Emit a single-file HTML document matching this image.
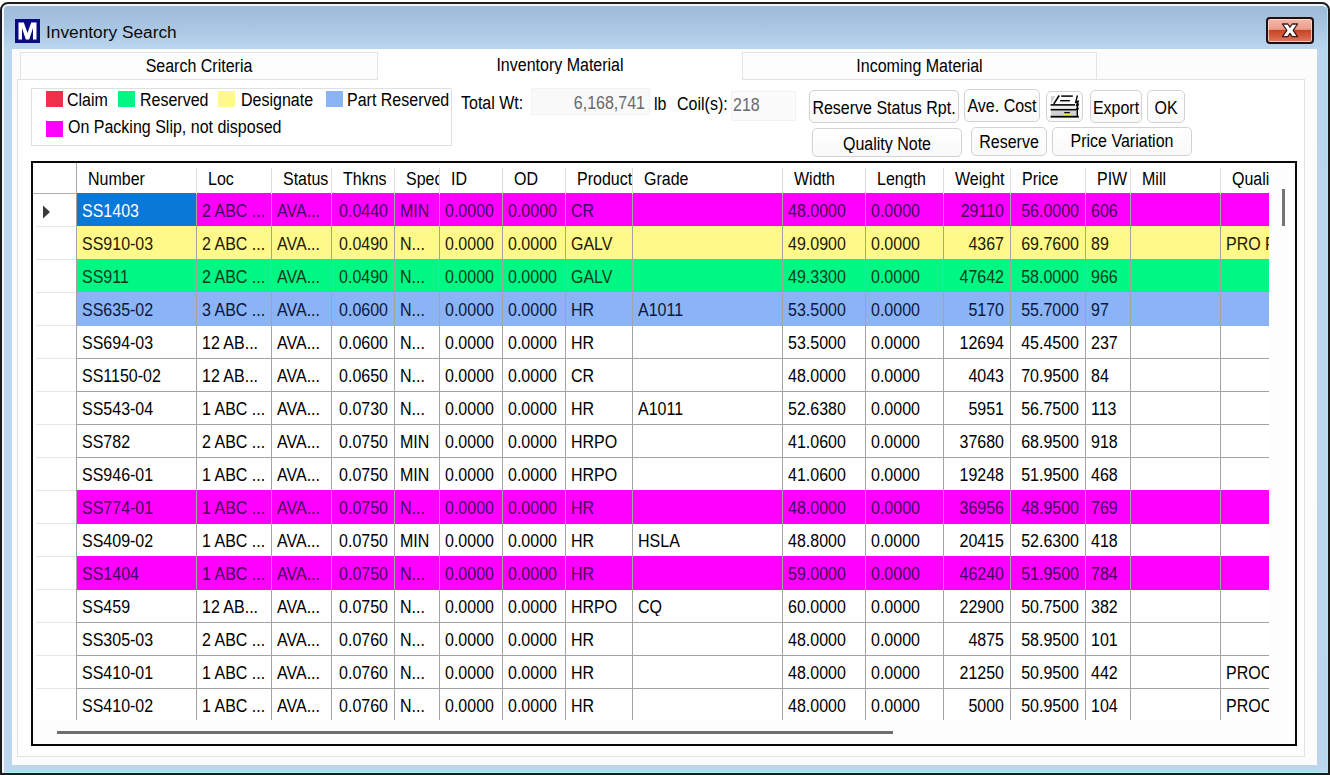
<!DOCTYPE html>
<html><head><meta charset="utf-8"><style>
*{box-sizing:border-box}
html,body{margin:0;padding:0;width:1330px;height:775px;overflow:hidden;background:#fff;font-family:"Liberation Sans",sans-serif;font-size:16px;color:#000}
.a{position:absolute}
#win{position:absolute;left:0;top:2px;width:1330px;height:773px;border:2px solid #1c1c1c;border-radius:8px 8px 0 0;background:linear-gradient(#9cb9d6 0px,#a9c6e3 24px,#bbd7ef 46px,#bcd6ee 100%);overflow:hidden}
#hl{position:absolute;left:0;top:0;right:0;bottom:0;border-left:2px solid #f4f8fc;border-top:2px solid #eef4fa;border-right:1.5px solid #a8e8f8;border-bottom:1.5px solid #b0f0fa;border-radius:6px 6px 0 0}
#client{position:absolute;left:12px;top:49px;width:1305px;height:716px;background:#fcfcfc}
.tab{position:absolute;border:1px solid #e4e4e4;border-bottom:none;background:#fdfdfd;text-align:center}
#page{position:absolute;left:17px;top:79px;width:1288px;height:678px;border:1px solid #e2e2e2;background:#fff}
.btn{position:absolute;border:1px solid #d2d2d2;border-radius:5px;background:linear-gradient(#ffffff,#f9f9f9);text-align:center;line-height:33px;white-space:nowrap}
.sq{position:absolute;width:17px;height:16px}
.lbl{position:absolute;white-space:nowrap;line-height:18px}
#grid{position:absolute;left:31px;top:161px;width:1266px;height:585px;border:2px solid #080808;background:#fdfdfd;overflow:hidden}
#grid div{position:absolute}
.hdr{background:#fff}
.hsep{top:5px;width:1px;height:25px;background:#dedede}
.ht{top:0;height:30px;line-height:31px;padding-left:11px;white-space:nowrap;overflow:hidden;background:transparent}
.c{height:32px;line-height:33px;padding-left:5px;white-space:nowrap;overflow:hidden}
.c.r{text-align:right;padding-left:0;padding-right:6px}
.t{position:static;display:inline-block;transform:scaleY(1.1)}
.vl{width:1px;height:33px;background:#a3a3a3}
.hl{height:1px;background:#a3a3a3}
</style></head><body>
<div id="win"><div id="hl"></div></div>
<!-- title -->
<div class="a" style="left:15px;top:19px;width:25px;height:24px;background:#0a0a82"></div>
<svg class="a" style="left:15px;top:19px" width="25" height="24" viewBox="0 0 25 24"><path d="M3.5 3.5 H8.8 L12.5 14 L16.2 3.5 H21.5 V20.5 H18 V9 L14.2 20.5 H10.8 L7 9 V20.5 H3.5 Z" fill="#fff"/></svg>
<div class="a" style="left:46px;top:22px;font-size:17.3px;line-height:20px;color:#0a0a0a;white-space:nowrap">Inventory Search</div>
<!-- close -->
<div class="a" style="left:1266px;top:17px;width:48px;height:27px;border:2px solid #1e1010;border-radius:4px;background:linear-gradient(#f4b8a8 0%,#eea090 40%,#e48c78 48%,#c94622 50%,#d2553a 70%,#e37a62 100%);box-shadow:inset 0 0 0 1px rgba(255,225,215,0.75)"></div>
<svg class="a" style="left:1266px;top:17px" width="48" height="27" viewBox="0 0 48 27"><path d="M16.5 7 L21.8 7 L24 10.2 L26.2 7 L31.5 7 L27.2 13.3 L31.5 19.6 L26.2 19.6 L24 16.4 L21.8 19.6 L16.5 19.6 L20.8 13.3 Z" fill="#fff" stroke="#3a1e1e" stroke-width="1.3" stroke-linejoin="round"/></svg>

<div id="client"></div>
<div class="tab" style="left:20px;top:52px;width:358px;height:28px;line-height:28px"><span class="t">Search Criteria</span></div>
<div class="tab" style="left:742px;top:52px;width:355px;height:28px;line-height:28px"><span class="t">Incoming Material</span></div>
<div id="page"></div>
<div class="a" style="left:378px;top:50px;width:364px;height:31px;background:#fff;text-align:center;line-height:29px"><span class="t">Inventory Material</span></div>

<!-- legend -->
<div class="a" style="left:31px;top:88px;width:421px;height:58px;border:1px solid #e0e0e0"></div>
<div class="sq" style="left:46px;top:91px;background:#f3304c"></div><div class="lbl" style="left:67px;top:92px"><span class="t">Claim</span></div>
<div class="sq" style="left:118px;top:91px;background:#00f784"></div><div class="lbl" style="left:140px;top:92px"><span class="t">Reserved</span></div>
<div class="sq" style="left:218px;top:91px;background:#fff98a"></div><div class="lbl" style="left:241px;top:92px"><span class="t">Designate</span></div>
<div class="sq" style="left:326px;top:91px;background:#8ab4f6"></div><div class="lbl" style="left:347px;top:92px"><span class="t">Part Reserved</span></div>
<div class="sq" style="left:46px;top:121px;background:#ff00ff"></div><div class="lbl" style="left:68px;top:119px"><span class="t">On Packing Slip, not disposed</span></div>

<!-- totals -->
<div class="lbl" style="left:461px;top:95px"><span class="t">Total Wt:</span></div>
<div class="a" style="left:531px;top:88px;width:119px;height:27px;border:1px solid #f2f2f2;background:#f9f9f9"></div>
<div class="lbl" style="left:531px;top:95px;width:114px;text-align:right;color:#6a6a6a"><span class="t">6,168,741</span></div>
<div class="lbl" style="left:654px;top:96px"><span class="t">lb</span></div>
<div class="lbl" style="left:677px;top:96px"><span class="t">Coil(s):</span></div>
<div class="a" style="left:731px;top:91px;width:65px;height:30px;border:1px solid #f2f2f2;background:#fbfbfb"></div>
<div class="lbl" style="left:733px;top:97px;color:#6a6a6a"><span class="t">218</span></div>

<!-- buttons -->
<div class="btn" style="left:809px;top:90px;width:150px;height:33px"><span class="t">Reserve Status Rpt.</span></div>
<div class="btn" style="left:964px;top:89px;width:76px;height:33px;line-height:31px"><span class="t">Ave. Cost</span></div>
<div class="btn" style="left:1046px;top:91px;width:37px;height:31px"></div>
<svg class="a" style="left:1046px;top:91px" width="37" height="31" viewBox="0 0 37 31">
<path d="M5 5 L9.2 5 L5 13 Z" fill="#d0d0d0"/>
<path d="M7.8 12.9 L13.2 4.5" stroke="#000" stroke-width="1.6" fill="none"/>
<path d="M15.2 5.1 H26.8" stroke="#000" stroke-width="1.5"/>
<path d="M14.2 9.7 H23.9" stroke="#000" stroke-width="1.4"/>
<rect x="5" y="14.8" width="24.5" height="3" fill="#eeeeee"/>
<rect x="5" y="19.6" width="26" height="5.2" fill="#d2d2d2"/>
<rect x="17.8" y="22.6" width="6.8" height="2.4" fill="#eeea3a"/>
<path d="M4.6 13.9 H29" stroke="#000" stroke-width="1.6"/>
<path d="M4.6 18.7 H30.5" stroke="#000" stroke-width="1.6"/>
<path d="M18.3 21.6 H23.9" stroke="#000" stroke-width="1.3"/>
<path d="M4.6 25.7 H32.8" stroke="#000" stroke-width="1.8"/>
<path d="M31.4 4.5 L29.6 11.6 L32.3 9.9 L30.4 14.6 L32.3 13 L30.6 18.4 L32.2 17.2 L31.3 18.8 L31.3 25.6" stroke="#000" stroke-width="1.4" fill="none" stroke-linejoin="round"/>
</svg>
<div class="btn" style="left:1090px;top:90px;width:52px;height:33px"><span class="t">Export</span></div>
<div class="btn" style="left:1147px;top:90px;width:38px;height:33px"><span class="t">OK</span></div>
<div class="btn" style="left:812px;top:128px;width:150px;height:29px;line-height:29px"><span class="t">Quality Note</span></div>
<div class="btn" style="left:971px;top:127px;width:76px;height:29px;line-height:27px"><span class="t">Reserve</span></div>
<div class="btn" style="left:1052px;top:127px;width:140px;height:29px;line-height:28px"><span class="t">Price Variation</span></div>

<!-- grid -->
<div id="grid">
<div style="left:0;top:0;width:1236px;height:557px;overflow:hidden;background:#fff">
<div class="hdr" style="left:0;top:0;width:1236px;height:30px"></div>
<div class="hsep" style="left:163px"></div>
<div class="ht" style="left:44px;width:119px"><span class="t">Number</span></div>
<div class="hsep" style="left:238px"></div>
<div class="ht" style="left:164px;width:74px"><span class="t">Loc</span></div>
<div class="hsep" style="left:298px"></div>
<div class="ht" style="left:239px;width:59px"><span class="t">Status</span></div>
<div class="hsep" style="left:361px"></div>
<div class="ht" style="left:299px;width:62px"><span class="t">Thkns</span></div>
<div class="hsep" style="left:406px"></div>
<div class="ht" style="left:362px;width:44px"><span class="t">Spec</span></div>
<div class="hsep" style="left:469px"></div>
<div class="ht" style="left:407px;width:62px"><span class="t">ID</span></div>
<div class="hsep" style="left:532px"></div>
<div class="ht" style="left:470px;width:62px"><span class="t">OD</span></div>
<div class="hsep" style="left:599px"></div>
<div class="ht" style="left:533px;width:66px"><span class="t">Product</span></div>
<div class="hsep" style="left:749px"></div>
<div class="ht" style="left:600px;width:149px"><span class="t">Grade</span></div>
<div class="hsep" style="left:832px"></div>
<div class="ht" style="left:750px;width:82px"><span class="t">Width</span></div>
<div class="hsep" style="left:910px"></div>
<div class="ht" style="left:833px;width:77px"><span class="t">Length</span></div>
<div class="hsep" style="left:977px"></div>
<div class="ht" style="left:911px;width:66px"><span class="t">Weight</span></div>
<div class="hsep" style="left:1052px"></div>
<div class="ht" style="left:978px;width:74px"><span class="t">Price</span></div>
<div class="hsep" style="left:1097px"></div>
<div class="ht" style="left:1053px;width:44px"><span class="t">PIW</span></div>
<div class="hsep" style="left:1187px"></div>
<div class="ht" style="left:1098px;width:89px"><span class="t">Mill</span></div>
<div class="ht" style="left:1188px;width:48px"><span class="t">Quality</span></div>
<div class="vl" style="left:43px;top:0;height:31px;background:#a8a8a8"></div>
<div class="hl" style="left:0px;top:30px;width:43px;background:#b0b0b0"></div>
<div style="left:0;top:31px;width:43px;height:32px;background:#fff"></div>
<div class="hl" style="left:3px;top:63px;width:40px;background:#e6e6e6"></div>
<div class="c" style="left:44px;top:30px;width:119px;height:34px;line-height:35px;background:#0a78d6;color:#ffffff"><span class="t">SS1403</span></div>
<div class="vl" style="left:163px;top:31px"></div>
<div class="c" style="left:164px;top:30px;width:74px;height:34px;line-height:35px;background:#ff00ff;color:#44005a"><span class="t">2 ABC ...</span></div>
<div class="vl" style="left:238px;top:31px"></div>
<div class="c" style="left:239px;top:30px;width:59px;height:34px;line-height:35px;background:#ff00ff;color:#44005a"><span class="t">AVA...</span></div>
<div class="vl" style="left:298px;top:31px"></div>
<div class="c r" style="left:299px;top:30px;width:62px;height:34px;line-height:35px;background:#ff00ff;color:#44005a"><span class="t">0.0440</span></div>
<div class="vl" style="left:361px;top:31px"></div>
<div class="c" style="left:362px;top:30px;width:44px;height:34px;line-height:35px;background:#ff00ff;color:#44005a"><span class="t">MIN</span></div>
<div class="vl" style="left:406px;top:31px"></div>
<div class="c" style="left:407px;top:30px;width:62px;height:34px;line-height:35px;background:#ff00ff;color:#44005a"><span class="t">0.0000</span></div>
<div class="vl" style="left:469px;top:31px"></div>
<div class="c" style="left:470px;top:30px;width:62px;height:34px;line-height:35px;background:#ff00ff;color:#44005a"><span class="t">0.0000</span></div>
<div class="vl" style="left:532px;top:31px"></div>
<div class="c" style="left:533px;top:30px;width:66px;height:34px;line-height:35px;background:#ff00ff;color:#44005a"><span class="t">CR</span></div>
<div class="vl" style="left:599px;top:31px"></div>
<div class="c" style="left:600px;top:30px;width:149px;height:34px;line-height:35px;background:#ff00ff;color:#44005a"></div>
<div class="vl" style="left:749px;top:31px"></div>
<div class="c" style="left:750px;top:30px;width:82px;height:34px;line-height:35px;background:#ff00ff;color:#44005a"><span class="t">48.0000</span></div>
<div class="vl" style="left:832px;top:31px"></div>
<div class="c" style="left:833px;top:30px;width:77px;height:34px;line-height:35px;background:#ff00ff;color:#44005a"><span class="t">0.0000</span></div>
<div class="vl" style="left:910px;top:31px"></div>
<div class="c r" style="left:911px;top:30px;width:66px;height:34px;line-height:35px;background:#ff00ff;color:#44005a"><span class="t">29110</span></div>
<div class="vl" style="left:977px;top:31px"></div>
<div class="c r" style="left:978px;top:30px;width:74px;height:34px;line-height:35px;background:#ff00ff;color:#44005a"><span class="t">56.0000</span></div>
<div class="vl" style="left:1052px;top:31px"></div>
<div class="c" style="left:1053px;top:30px;width:44px;height:34px;line-height:35px;background:#ff00ff;color:#44005a"><span class="t">606</span></div>
<div class="vl" style="left:1097px;top:31px"></div>
<div class="c" style="left:1098px;top:30px;width:89px;height:34px;line-height:35px;background:#ff00ff;color:#44005a"></div>
<div class="vl" style="left:1187px;top:31px"></div>
<div class="c" style="left:1188px;top:30px;width:48px;height:34px;line-height:35px;background:#ff00ff;color:#44005a"></div>
<div class="vl" style="left:43px;top:31px"></div>
<div style="left:0;top:64px;width:43px;height:32px;background:#fff"></div>
<div class="hl" style="left:3px;top:96px;width:40px;background:#e6e6e6"></div>
<div class="c" style="left:44px;top:63px;width:119px;height:34px;line-height:35px;background:#fff98a;color:#1c1a00"><span class="t">SS910-03</span></div>
<div class="vl" style="left:163px;top:64px"></div>
<div class="c" style="left:164px;top:63px;width:74px;height:34px;line-height:35px;background:#fff98a;color:#1c1a00"><span class="t">2 ABC ...</span></div>
<div class="vl" style="left:238px;top:64px"></div>
<div class="c" style="left:239px;top:63px;width:59px;height:34px;line-height:35px;background:#fff98a;color:#1c1a00"><span class="t">AVA...</span></div>
<div class="vl" style="left:298px;top:64px"></div>
<div class="c r" style="left:299px;top:63px;width:62px;height:34px;line-height:35px;background:#fff98a;color:#1c1a00"><span class="t">0.0490</span></div>
<div class="vl" style="left:361px;top:64px"></div>
<div class="c" style="left:362px;top:63px;width:44px;height:34px;line-height:35px;background:#fff98a;color:#1c1a00"><span class="t">N...</span></div>
<div class="vl" style="left:406px;top:64px"></div>
<div class="c" style="left:407px;top:63px;width:62px;height:34px;line-height:35px;background:#fff98a;color:#1c1a00"><span class="t">0.0000</span></div>
<div class="vl" style="left:469px;top:64px"></div>
<div class="c" style="left:470px;top:63px;width:62px;height:34px;line-height:35px;background:#fff98a;color:#1c1a00"><span class="t">0.0000</span></div>
<div class="vl" style="left:532px;top:64px"></div>
<div class="c" style="left:533px;top:63px;width:66px;height:34px;line-height:35px;background:#fff98a;color:#1c1a00"><span class="t">GALV</span></div>
<div class="vl" style="left:599px;top:64px"></div>
<div class="c" style="left:600px;top:63px;width:149px;height:34px;line-height:35px;background:#fff98a;color:#1c1a00"></div>
<div class="vl" style="left:749px;top:64px"></div>
<div class="c" style="left:750px;top:63px;width:82px;height:34px;line-height:35px;background:#fff98a;color:#1c1a00"><span class="t">49.0900</span></div>
<div class="vl" style="left:832px;top:64px"></div>
<div class="c" style="left:833px;top:63px;width:77px;height:34px;line-height:35px;background:#fff98a;color:#1c1a00"><span class="t">0.0000</span></div>
<div class="vl" style="left:910px;top:64px"></div>
<div class="c r" style="left:911px;top:63px;width:66px;height:34px;line-height:35px;background:#fff98a;color:#1c1a00"><span class="t">4367</span></div>
<div class="vl" style="left:977px;top:64px"></div>
<div class="c r" style="left:978px;top:63px;width:74px;height:34px;line-height:35px;background:#fff98a;color:#1c1a00"><span class="t">69.7600</span></div>
<div class="vl" style="left:1052px;top:64px"></div>
<div class="c" style="left:1053px;top:63px;width:44px;height:34px;line-height:35px;background:#fff98a;color:#1c1a00"><span class="t">89</span></div>
<div class="vl" style="left:1097px;top:64px"></div>
<div class="c" style="left:1098px;top:63px;width:89px;height:34px;line-height:35px;background:#fff98a;color:#1c1a00"></div>
<div class="vl" style="left:1187px;top:64px"></div>
<div class="c" style="left:1188px;top:63px;width:48px;height:34px;line-height:35px;background:#fff98a;color:#1c1a00"><span class="t">PRO F</span></div>
<div class="vl" style="left:43px;top:64px"></div>
<div style="left:0;top:97px;width:43px;height:32px;background:#fff"></div>
<div class="hl" style="left:3px;top:129px;width:40px;background:#e6e6e6"></div>
<div class="c" style="left:44px;top:96px;width:119px;height:34px;line-height:35px;background:#00f784;color:#003c1c"><span class="t">SS911</span></div>
<div class="vl" style="left:163px;top:97px"></div>
<div class="c" style="left:164px;top:96px;width:74px;height:34px;line-height:35px;background:#00f784;color:#003c1c"><span class="t">2 ABC ...</span></div>
<div class="vl" style="left:238px;top:97px"></div>
<div class="c" style="left:239px;top:96px;width:59px;height:34px;line-height:35px;background:#00f784;color:#003c1c"><span class="t">AVA...</span></div>
<div class="vl" style="left:298px;top:97px"></div>
<div class="c r" style="left:299px;top:96px;width:62px;height:34px;line-height:35px;background:#00f784;color:#003c1c"><span class="t">0.0490</span></div>
<div class="vl" style="left:361px;top:97px"></div>
<div class="c" style="left:362px;top:96px;width:44px;height:34px;line-height:35px;background:#00f784;color:#003c1c"><span class="t">N...</span></div>
<div class="vl" style="left:406px;top:97px"></div>
<div class="c" style="left:407px;top:96px;width:62px;height:34px;line-height:35px;background:#00f784;color:#003c1c"><span class="t">0.0000</span></div>
<div class="vl" style="left:469px;top:97px"></div>
<div class="c" style="left:470px;top:96px;width:62px;height:34px;line-height:35px;background:#00f784;color:#003c1c"><span class="t">0.0000</span></div>
<div class="vl" style="left:532px;top:97px"></div>
<div class="c" style="left:533px;top:96px;width:66px;height:34px;line-height:35px;background:#00f784;color:#003c1c"><span class="t">GALV</span></div>
<div class="vl" style="left:599px;top:97px"></div>
<div class="c" style="left:600px;top:96px;width:149px;height:34px;line-height:35px;background:#00f784;color:#003c1c"></div>
<div class="vl" style="left:749px;top:97px"></div>
<div class="c" style="left:750px;top:96px;width:82px;height:34px;line-height:35px;background:#00f784;color:#003c1c"><span class="t">49.3300</span></div>
<div class="vl" style="left:832px;top:97px"></div>
<div class="c" style="left:833px;top:96px;width:77px;height:34px;line-height:35px;background:#00f784;color:#003c1c"><span class="t">0.0000</span></div>
<div class="vl" style="left:910px;top:97px"></div>
<div class="c r" style="left:911px;top:96px;width:66px;height:34px;line-height:35px;background:#00f784;color:#003c1c"><span class="t">47642</span></div>
<div class="vl" style="left:977px;top:97px"></div>
<div class="c r" style="left:978px;top:96px;width:74px;height:34px;line-height:35px;background:#00f784;color:#003c1c"><span class="t">58.0000</span></div>
<div class="vl" style="left:1052px;top:97px"></div>
<div class="c" style="left:1053px;top:96px;width:44px;height:34px;line-height:35px;background:#00f784;color:#003c1c"><span class="t">966</span></div>
<div class="vl" style="left:1097px;top:97px"></div>
<div class="c" style="left:1098px;top:96px;width:89px;height:34px;line-height:35px;background:#00f784;color:#003c1c"></div>
<div class="vl" style="left:1187px;top:97px"></div>
<div class="c" style="left:1188px;top:96px;width:48px;height:34px;line-height:35px;background:#00f784;color:#003c1c"></div>
<div class="vl" style="left:43px;top:97px"></div>
<div style="left:0;top:130px;width:43px;height:32px;background:#fff"></div>
<div class="hl" style="left:3px;top:162px;width:40px;background:#e6e6e6"></div>
<div class="c" style="left:44px;top:129px;width:119px;height:34px;line-height:35px;background:#8ab4f6;color:#0c1640"><span class="t">SS635-02</span></div>
<div class="vl" style="left:163px;top:130px"></div>
<div class="c" style="left:164px;top:129px;width:74px;height:34px;line-height:35px;background:#8ab4f6;color:#0c1640"><span class="t">3 ABC ...</span></div>
<div class="vl" style="left:238px;top:130px"></div>
<div class="c" style="left:239px;top:129px;width:59px;height:34px;line-height:35px;background:#8ab4f6;color:#0c1640"><span class="t">AVA...</span></div>
<div class="vl" style="left:298px;top:130px"></div>
<div class="c r" style="left:299px;top:129px;width:62px;height:34px;line-height:35px;background:#8ab4f6;color:#0c1640"><span class="t">0.0600</span></div>
<div class="vl" style="left:361px;top:130px"></div>
<div class="c" style="left:362px;top:129px;width:44px;height:34px;line-height:35px;background:#8ab4f6;color:#0c1640"><span class="t">N...</span></div>
<div class="vl" style="left:406px;top:130px"></div>
<div class="c" style="left:407px;top:129px;width:62px;height:34px;line-height:35px;background:#8ab4f6;color:#0c1640"><span class="t">0.0000</span></div>
<div class="vl" style="left:469px;top:130px"></div>
<div class="c" style="left:470px;top:129px;width:62px;height:34px;line-height:35px;background:#8ab4f6;color:#0c1640"><span class="t">0.0000</span></div>
<div class="vl" style="left:532px;top:130px"></div>
<div class="c" style="left:533px;top:129px;width:66px;height:34px;line-height:35px;background:#8ab4f6;color:#0c1640"><span class="t">HR</span></div>
<div class="vl" style="left:599px;top:130px"></div>
<div class="c" style="left:600px;top:129px;width:149px;height:34px;line-height:35px;background:#8ab4f6;color:#0c1640"><span class="t">A1011</span></div>
<div class="vl" style="left:749px;top:130px"></div>
<div class="c" style="left:750px;top:129px;width:82px;height:34px;line-height:35px;background:#8ab4f6;color:#0c1640"><span class="t">53.5000</span></div>
<div class="vl" style="left:832px;top:130px"></div>
<div class="c" style="left:833px;top:129px;width:77px;height:34px;line-height:35px;background:#8ab4f6;color:#0c1640"><span class="t">0.0000</span></div>
<div class="vl" style="left:910px;top:130px"></div>
<div class="c r" style="left:911px;top:129px;width:66px;height:34px;line-height:35px;background:#8ab4f6;color:#0c1640"><span class="t">5170</span></div>
<div class="vl" style="left:977px;top:130px"></div>
<div class="c r" style="left:978px;top:129px;width:74px;height:34px;line-height:35px;background:#8ab4f6;color:#0c1640"><span class="t">55.7000</span></div>
<div class="vl" style="left:1052px;top:130px"></div>
<div class="c" style="left:1053px;top:129px;width:44px;height:34px;line-height:35px;background:#8ab4f6;color:#0c1640"><span class="t">97</span></div>
<div class="vl" style="left:1097px;top:130px"></div>
<div class="c" style="left:1098px;top:129px;width:89px;height:34px;line-height:35px;background:#8ab4f6;color:#0c1640"></div>
<div class="vl" style="left:1187px;top:130px"></div>
<div class="c" style="left:1188px;top:129px;width:48px;height:34px;line-height:35px;background:#8ab4f6;color:#0c1640"></div>
<div class="vl" style="left:43px;top:130px"></div>
<div style="left:0;top:163px;width:43px;height:32px;background:#fff"></div>
<div class="hl" style="left:3px;top:195px;width:40px;background:#e6e6e6"></div>
<div class="c" style="left:44px;top:163px;width:119px;height:32px;line-height:33px;background:#ffffff;color:#000000"><span class="t">SS694-03</span></div>
<div class="vl" style="left:163px;top:163px"></div>
<div class="c" style="left:164px;top:163px;width:74px;height:32px;line-height:33px;background:#ffffff;color:#000000"><span class="t">12 AB...</span></div>
<div class="vl" style="left:238px;top:163px"></div>
<div class="c" style="left:239px;top:163px;width:59px;height:32px;line-height:33px;background:#ffffff;color:#000000"><span class="t">AVA...</span></div>
<div class="vl" style="left:298px;top:163px"></div>
<div class="c r" style="left:299px;top:163px;width:62px;height:32px;line-height:33px;background:#ffffff;color:#000000"><span class="t">0.0600</span></div>
<div class="vl" style="left:361px;top:163px"></div>
<div class="c" style="left:362px;top:163px;width:44px;height:32px;line-height:33px;background:#ffffff;color:#000000"><span class="t">N...</span></div>
<div class="vl" style="left:406px;top:163px"></div>
<div class="c" style="left:407px;top:163px;width:62px;height:32px;line-height:33px;background:#ffffff;color:#000000"><span class="t">0.0000</span></div>
<div class="vl" style="left:469px;top:163px"></div>
<div class="c" style="left:470px;top:163px;width:62px;height:32px;line-height:33px;background:#ffffff;color:#000000"><span class="t">0.0000</span></div>
<div class="vl" style="left:532px;top:163px"></div>
<div class="c" style="left:533px;top:163px;width:66px;height:32px;line-height:33px;background:#ffffff;color:#000000"><span class="t">HR</span></div>
<div class="vl" style="left:599px;top:163px"></div>
<div class="c" style="left:600px;top:163px;width:149px;height:32px;line-height:33px;background:#ffffff;color:#000000"></div>
<div class="vl" style="left:749px;top:163px"></div>
<div class="c" style="left:750px;top:163px;width:82px;height:32px;line-height:33px;background:#ffffff;color:#000000"><span class="t">53.5000</span></div>
<div class="vl" style="left:832px;top:163px"></div>
<div class="c" style="left:833px;top:163px;width:77px;height:32px;line-height:33px;background:#ffffff;color:#000000"><span class="t">0.0000</span></div>
<div class="vl" style="left:910px;top:163px"></div>
<div class="c r" style="left:911px;top:163px;width:66px;height:32px;line-height:33px;background:#ffffff;color:#000000"><span class="t">12694</span></div>
<div class="vl" style="left:977px;top:163px"></div>
<div class="c r" style="left:978px;top:163px;width:74px;height:32px;line-height:33px;background:#ffffff;color:#000000"><span class="t">45.4500</span></div>
<div class="vl" style="left:1052px;top:163px"></div>
<div class="c" style="left:1053px;top:163px;width:44px;height:32px;line-height:33px;background:#ffffff;color:#000000"><span class="t">237</span></div>
<div class="vl" style="left:1097px;top:163px"></div>
<div class="c" style="left:1098px;top:163px;width:89px;height:32px;line-height:33px;background:#ffffff;color:#000000"></div>
<div class="vl" style="left:1187px;top:163px"></div>
<div class="c" style="left:1188px;top:163px;width:48px;height:32px;line-height:33px;background:#ffffff;color:#000000"></div>
<div class="vl" style="left:43px;top:163px"></div>
<div class="hl" style="left:44px;top:195px;width:1192px"></div>
<div style="left:0;top:196px;width:43px;height:32px;background:#fff"></div>
<div class="hl" style="left:3px;top:228px;width:40px;background:#e6e6e6"></div>
<div class="c" style="left:44px;top:196px;width:119px;height:32px;line-height:33px;background:#ffffff;color:#000000"><span class="t">SS1150-02</span></div>
<div class="vl" style="left:163px;top:196px"></div>
<div class="c" style="left:164px;top:196px;width:74px;height:32px;line-height:33px;background:#ffffff;color:#000000"><span class="t">12 AB...</span></div>
<div class="vl" style="left:238px;top:196px"></div>
<div class="c" style="left:239px;top:196px;width:59px;height:32px;line-height:33px;background:#ffffff;color:#000000"><span class="t">AVA...</span></div>
<div class="vl" style="left:298px;top:196px"></div>
<div class="c r" style="left:299px;top:196px;width:62px;height:32px;line-height:33px;background:#ffffff;color:#000000"><span class="t">0.0650</span></div>
<div class="vl" style="left:361px;top:196px"></div>
<div class="c" style="left:362px;top:196px;width:44px;height:32px;line-height:33px;background:#ffffff;color:#000000"><span class="t">N...</span></div>
<div class="vl" style="left:406px;top:196px"></div>
<div class="c" style="left:407px;top:196px;width:62px;height:32px;line-height:33px;background:#ffffff;color:#000000"><span class="t">0.0000</span></div>
<div class="vl" style="left:469px;top:196px"></div>
<div class="c" style="left:470px;top:196px;width:62px;height:32px;line-height:33px;background:#ffffff;color:#000000"><span class="t">0.0000</span></div>
<div class="vl" style="left:532px;top:196px"></div>
<div class="c" style="left:533px;top:196px;width:66px;height:32px;line-height:33px;background:#ffffff;color:#000000"><span class="t">CR</span></div>
<div class="vl" style="left:599px;top:196px"></div>
<div class="c" style="left:600px;top:196px;width:149px;height:32px;line-height:33px;background:#ffffff;color:#000000"></div>
<div class="vl" style="left:749px;top:196px"></div>
<div class="c" style="left:750px;top:196px;width:82px;height:32px;line-height:33px;background:#ffffff;color:#000000"><span class="t">48.0000</span></div>
<div class="vl" style="left:832px;top:196px"></div>
<div class="c" style="left:833px;top:196px;width:77px;height:32px;line-height:33px;background:#ffffff;color:#000000"><span class="t">0.0000</span></div>
<div class="vl" style="left:910px;top:196px"></div>
<div class="c r" style="left:911px;top:196px;width:66px;height:32px;line-height:33px;background:#ffffff;color:#000000"><span class="t">4043</span></div>
<div class="vl" style="left:977px;top:196px"></div>
<div class="c r" style="left:978px;top:196px;width:74px;height:32px;line-height:33px;background:#ffffff;color:#000000"><span class="t">70.9500</span></div>
<div class="vl" style="left:1052px;top:196px"></div>
<div class="c" style="left:1053px;top:196px;width:44px;height:32px;line-height:33px;background:#ffffff;color:#000000"><span class="t">84</span></div>
<div class="vl" style="left:1097px;top:196px"></div>
<div class="c" style="left:1098px;top:196px;width:89px;height:32px;line-height:33px;background:#ffffff;color:#000000"></div>
<div class="vl" style="left:1187px;top:196px"></div>
<div class="c" style="left:1188px;top:196px;width:48px;height:32px;line-height:33px;background:#ffffff;color:#000000"></div>
<div class="vl" style="left:43px;top:196px"></div>
<div class="hl" style="left:44px;top:228px;width:1192px"></div>
<div style="left:0;top:229px;width:43px;height:32px;background:#fff"></div>
<div class="hl" style="left:3px;top:261px;width:40px;background:#e6e6e6"></div>
<div class="c" style="left:44px;top:229px;width:119px;height:32px;line-height:33px;background:#ffffff;color:#000000"><span class="t">SS543-04</span></div>
<div class="vl" style="left:163px;top:229px"></div>
<div class="c" style="left:164px;top:229px;width:74px;height:32px;line-height:33px;background:#ffffff;color:#000000"><span class="t">1 ABC ...</span></div>
<div class="vl" style="left:238px;top:229px"></div>
<div class="c" style="left:239px;top:229px;width:59px;height:32px;line-height:33px;background:#ffffff;color:#000000"><span class="t">AVA...</span></div>
<div class="vl" style="left:298px;top:229px"></div>
<div class="c r" style="left:299px;top:229px;width:62px;height:32px;line-height:33px;background:#ffffff;color:#000000"><span class="t">0.0730</span></div>
<div class="vl" style="left:361px;top:229px"></div>
<div class="c" style="left:362px;top:229px;width:44px;height:32px;line-height:33px;background:#ffffff;color:#000000"><span class="t">N...</span></div>
<div class="vl" style="left:406px;top:229px"></div>
<div class="c" style="left:407px;top:229px;width:62px;height:32px;line-height:33px;background:#ffffff;color:#000000"><span class="t">0.0000</span></div>
<div class="vl" style="left:469px;top:229px"></div>
<div class="c" style="left:470px;top:229px;width:62px;height:32px;line-height:33px;background:#ffffff;color:#000000"><span class="t">0.0000</span></div>
<div class="vl" style="left:532px;top:229px"></div>
<div class="c" style="left:533px;top:229px;width:66px;height:32px;line-height:33px;background:#ffffff;color:#000000"><span class="t">HR</span></div>
<div class="vl" style="left:599px;top:229px"></div>
<div class="c" style="left:600px;top:229px;width:149px;height:32px;line-height:33px;background:#ffffff;color:#000000"><span class="t">A1011</span></div>
<div class="vl" style="left:749px;top:229px"></div>
<div class="c" style="left:750px;top:229px;width:82px;height:32px;line-height:33px;background:#ffffff;color:#000000"><span class="t">52.6380</span></div>
<div class="vl" style="left:832px;top:229px"></div>
<div class="c" style="left:833px;top:229px;width:77px;height:32px;line-height:33px;background:#ffffff;color:#000000"><span class="t">0.0000</span></div>
<div class="vl" style="left:910px;top:229px"></div>
<div class="c r" style="left:911px;top:229px;width:66px;height:32px;line-height:33px;background:#ffffff;color:#000000"><span class="t">5951</span></div>
<div class="vl" style="left:977px;top:229px"></div>
<div class="c r" style="left:978px;top:229px;width:74px;height:32px;line-height:33px;background:#ffffff;color:#000000"><span class="t">56.7500</span></div>
<div class="vl" style="left:1052px;top:229px"></div>
<div class="c" style="left:1053px;top:229px;width:44px;height:32px;line-height:33px;background:#ffffff;color:#000000"><span class="t">113</span></div>
<div class="vl" style="left:1097px;top:229px"></div>
<div class="c" style="left:1098px;top:229px;width:89px;height:32px;line-height:33px;background:#ffffff;color:#000000"></div>
<div class="vl" style="left:1187px;top:229px"></div>
<div class="c" style="left:1188px;top:229px;width:48px;height:32px;line-height:33px;background:#ffffff;color:#000000"></div>
<div class="vl" style="left:43px;top:229px"></div>
<div class="hl" style="left:44px;top:261px;width:1192px"></div>
<div style="left:0;top:262px;width:43px;height:32px;background:#fff"></div>
<div class="hl" style="left:3px;top:294px;width:40px;background:#e6e6e6"></div>
<div class="c" style="left:44px;top:262px;width:119px;height:32px;line-height:33px;background:#ffffff;color:#000000"><span class="t">SS782</span></div>
<div class="vl" style="left:163px;top:262px"></div>
<div class="c" style="left:164px;top:262px;width:74px;height:32px;line-height:33px;background:#ffffff;color:#000000"><span class="t">2 ABC ...</span></div>
<div class="vl" style="left:238px;top:262px"></div>
<div class="c" style="left:239px;top:262px;width:59px;height:32px;line-height:33px;background:#ffffff;color:#000000"><span class="t">AVA...</span></div>
<div class="vl" style="left:298px;top:262px"></div>
<div class="c r" style="left:299px;top:262px;width:62px;height:32px;line-height:33px;background:#ffffff;color:#000000"><span class="t">0.0750</span></div>
<div class="vl" style="left:361px;top:262px"></div>
<div class="c" style="left:362px;top:262px;width:44px;height:32px;line-height:33px;background:#ffffff;color:#000000"><span class="t">MIN</span></div>
<div class="vl" style="left:406px;top:262px"></div>
<div class="c" style="left:407px;top:262px;width:62px;height:32px;line-height:33px;background:#ffffff;color:#000000"><span class="t">0.0000</span></div>
<div class="vl" style="left:469px;top:262px"></div>
<div class="c" style="left:470px;top:262px;width:62px;height:32px;line-height:33px;background:#ffffff;color:#000000"><span class="t">0.0000</span></div>
<div class="vl" style="left:532px;top:262px"></div>
<div class="c" style="left:533px;top:262px;width:66px;height:32px;line-height:33px;background:#ffffff;color:#000000"><span class="t">HRPO</span></div>
<div class="vl" style="left:599px;top:262px"></div>
<div class="c" style="left:600px;top:262px;width:149px;height:32px;line-height:33px;background:#ffffff;color:#000000"></div>
<div class="vl" style="left:749px;top:262px"></div>
<div class="c" style="left:750px;top:262px;width:82px;height:32px;line-height:33px;background:#ffffff;color:#000000"><span class="t">41.0600</span></div>
<div class="vl" style="left:832px;top:262px"></div>
<div class="c" style="left:833px;top:262px;width:77px;height:32px;line-height:33px;background:#ffffff;color:#000000"><span class="t">0.0000</span></div>
<div class="vl" style="left:910px;top:262px"></div>
<div class="c r" style="left:911px;top:262px;width:66px;height:32px;line-height:33px;background:#ffffff;color:#000000"><span class="t">37680</span></div>
<div class="vl" style="left:977px;top:262px"></div>
<div class="c r" style="left:978px;top:262px;width:74px;height:32px;line-height:33px;background:#ffffff;color:#000000"><span class="t">68.9500</span></div>
<div class="vl" style="left:1052px;top:262px"></div>
<div class="c" style="left:1053px;top:262px;width:44px;height:32px;line-height:33px;background:#ffffff;color:#000000"><span class="t">918</span></div>
<div class="vl" style="left:1097px;top:262px"></div>
<div class="c" style="left:1098px;top:262px;width:89px;height:32px;line-height:33px;background:#ffffff;color:#000000"></div>
<div class="vl" style="left:1187px;top:262px"></div>
<div class="c" style="left:1188px;top:262px;width:48px;height:32px;line-height:33px;background:#ffffff;color:#000000"></div>
<div class="vl" style="left:43px;top:262px"></div>
<div class="hl" style="left:44px;top:294px;width:1192px"></div>
<div style="left:0;top:295px;width:43px;height:32px;background:#fff"></div>
<div class="hl" style="left:3px;top:327px;width:40px;background:#e6e6e6"></div>
<div class="c" style="left:44px;top:295px;width:119px;height:32px;line-height:33px;background:#ffffff;color:#000000"><span class="t">SS946-01</span></div>
<div class="vl" style="left:163px;top:295px"></div>
<div class="c" style="left:164px;top:295px;width:74px;height:32px;line-height:33px;background:#ffffff;color:#000000"><span class="t">1 ABC ...</span></div>
<div class="vl" style="left:238px;top:295px"></div>
<div class="c" style="left:239px;top:295px;width:59px;height:32px;line-height:33px;background:#ffffff;color:#000000"><span class="t">AVA...</span></div>
<div class="vl" style="left:298px;top:295px"></div>
<div class="c r" style="left:299px;top:295px;width:62px;height:32px;line-height:33px;background:#ffffff;color:#000000"><span class="t">0.0750</span></div>
<div class="vl" style="left:361px;top:295px"></div>
<div class="c" style="left:362px;top:295px;width:44px;height:32px;line-height:33px;background:#ffffff;color:#000000"><span class="t">MIN</span></div>
<div class="vl" style="left:406px;top:295px"></div>
<div class="c" style="left:407px;top:295px;width:62px;height:32px;line-height:33px;background:#ffffff;color:#000000"><span class="t">0.0000</span></div>
<div class="vl" style="left:469px;top:295px"></div>
<div class="c" style="left:470px;top:295px;width:62px;height:32px;line-height:33px;background:#ffffff;color:#000000"><span class="t">0.0000</span></div>
<div class="vl" style="left:532px;top:295px"></div>
<div class="c" style="left:533px;top:295px;width:66px;height:32px;line-height:33px;background:#ffffff;color:#000000"><span class="t">HRPO</span></div>
<div class="vl" style="left:599px;top:295px"></div>
<div class="c" style="left:600px;top:295px;width:149px;height:32px;line-height:33px;background:#ffffff;color:#000000"></div>
<div class="vl" style="left:749px;top:295px"></div>
<div class="c" style="left:750px;top:295px;width:82px;height:32px;line-height:33px;background:#ffffff;color:#000000"><span class="t">41.0600</span></div>
<div class="vl" style="left:832px;top:295px"></div>
<div class="c" style="left:833px;top:295px;width:77px;height:32px;line-height:33px;background:#ffffff;color:#000000"><span class="t">0.0000</span></div>
<div class="vl" style="left:910px;top:295px"></div>
<div class="c r" style="left:911px;top:295px;width:66px;height:32px;line-height:33px;background:#ffffff;color:#000000"><span class="t">19248</span></div>
<div class="vl" style="left:977px;top:295px"></div>
<div class="c r" style="left:978px;top:295px;width:74px;height:32px;line-height:33px;background:#ffffff;color:#000000"><span class="t">51.9500</span></div>
<div class="vl" style="left:1052px;top:295px"></div>
<div class="c" style="left:1053px;top:295px;width:44px;height:32px;line-height:33px;background:#ffffff;color:#000000"><span class="t">468</span></div>
<div class="vl" style="left:1097px;top:295px"></div>
<div class="c" style="left:1098px;top:295px;width:89px;height:32px;line-height:33px;background:#ffffff;color:#000000"></div>
<div class="vl" style="left:1187px;top:295px"></div>
<div class="c" style="left:1188px;top:295px;width:48px;height:32px;line-height:33px;background:#ffffff;color:#000000"></div>
<div class="vl" style="left:43px;top:295px"></div>
<div style="left:0;top:328px;width:43px;height:32px;background:#fff"></div>
<div class="hl" style="left:3px;top:360px;width:40px;background:#e6e6e6"></div>
<div class="c" style="left:44px;top:327px;width:119px;height:34px;line-height:35px;background:#ff00ff;color:#44005a"><span class="t">SS774-01</span></div>
<div class="vl" style="left:163px;top:328px"></div>
<div class="c" style="left:164px;top:327px;width:74px;height:34px;line-height:35px;background:#ff00ff;color:#44005a"><span class="t">1 ABC ...</span></div>
<div class="vl" style="left:238px;top:328px"></div>
<div class="c" style="left:239px;top:327px;width:59px;height:34px;line-height:35px;background:#ff00ff;color:#44005a"><span class="t">AVA...</span></div>
<div class="vl" style="left:298px;top:328px"></div>
<div class="c r" style="left:299px;top:327px;width:62px;height:34px;line-height:35px;background:#ff00ff;color:#44005a"><span class="t">0.0750</span></div>
<div class="vl" style="left:361px;top:328px"></div>
<div class="c" style="left:362px;top:327px;width:44px;height:34px;line-height:35px;background:#ff00ff;color:#44005a"><span class="t">N...</span></div>
<div class="vl" style="left:406px;top:328px"></div>
<div class="c" style="left:407px;top:327px;width:62px;height:34px;line-height:35px;background:#ff00ff;color:#44005a"><span class="t">0.0000</span></div>
<div class="vl" style="left:469px;top:328px"></div>
<div class="c" style="left:470px;top:327px;width:62px;height:34px;line-height:35px;background:#ff00ff;color:#44005a"><span class="t">0.0000</span></div>
<div class="vl" style="left:532px;top:328px"></div>
<div class="c" style="left:533px;top:327px;width:66px;height:34px;line-height:35px;background:#ff00ff;color:#44005a"><span class="t">HR</span></div>
<div class="vl" style="left:599px;top:328px"></div>
<div class="c" style="left:600px;top:327px;width:149px;height:34px;line-height:35px;background:#ff00ff;color:#44005a"></div>
<div class="vl" style="left:749px;top:328px"></div>
<div class="c" style="left:750px;top:327px;width:82px;height:34px;line-height:35px;background:#ff00ff;color:#44005a"><span class="t">48.0000</span></div>
<div class="vl" style="left:832px;top:328px"></div>
<div class="c" style="left:833px;top:327px;width:77px;height:34px;line-height:35px;background:#ff00ff;color:#44005a"><span class="t">0.0000</span></div>
<div class="vl" style="left:910px;top:328px"></div>
<div class="c r" style="left:911px;top:327px;width:66px;height:34px;line-height:35px;background:#ff00ff;color:#44005a"><span class="t">36956</span></div>
<div class="vl" style="left:977px;top:328px"></div>
<div class="c r" style="left:978px;top:327px;width:74px;height:34px;line-height:35px;background:#ff00ff;color:#44005a"><span class="t">48.9500</span></div>
<div class="vl" style="left:1052px;top:328px"></div>
<div class="c" style="left:1053px;top:327px;width:44px;height:34px;line-height:35px;background:#ff00ff;color:#44005a"><span class="t">769</span></div>
<div class="vl" style="left:1097px;top:328px"></div>
<div class="c" style="left:1098px;top:327px;width:89px;height:34px;line-height:35px;background:#ff00ff;color:#44005a"></div>
<div class="vl" style="left:1187px;top:328px"></div>
<div class="c" style="left:1188px;top:327px;width:48px;height:34px;line-height:35px;background:#ff00ff;color:#44005a"></div>
<div class="vl" style="left:43px;top:328px"></div>
<div style="left:0;top:361px;width:43px;height:32px;background:#fff"></div>
<div class="hl" style="left:3px;top:393px;width:40px;background:#e6e6e6"></div>
<div class="c" style="left:44px;top:361px;width:119px;height:32px;line-height:33px;background:#ffffff;color:#000000"><span class="t">SS409-02</span></div>
<div class="vl" style="left:163px;top:361px"></div>
<div class="c" style="left:164px;top:361px;width:74px;height:32px;line-height:33px;background:#ffffff;color:#000000"><span class="t">1 ABC ...</span></div>
<div class="vl" style="left:238px;top:361px"></div>
<div class="c" style="left:239px;top:361px;width:59px;height:32px;line-height:33px;background:#ffffff;color:#000000"><span class="t">AVA...</span></div>
<div class="vl" style="left:298px;top:361px"></div>
<div class="c r" style="left:299px;top:361px;width:62px;height:32px;line-height:33px;background:#ffffff;color:#000000"><span class="t">0.0750</span></div>
<div class="vl" style="left:361px;top:361px"></div>
<div class="c" style="left:362px;top:361px;width:44px;height:32px;line-height:33px;background:#ffffff;color:#000000"><span class="t">MIN</span></div>
<div class="vl" style="left:406px;top:361px"></div>
<div class="c" style="left:407px;top:361px;width:62px;height:32px;line-height:33px;background:#ffffff;color:#000000"><span class="t">0.0000</span></div>
<div class="vl" style="left:469px;top:361px"></div>
<div class="c" style="left:470px;top:361px;width:62px;height:32px;line-height:33px;background:#ffffff;color:#000000"><span class="t">0.0000</span></div>
<div class="vl" style="left:532px;top:361px"></div>
<div class="c" style="left:533px;top:361px;width:66px;height:32px;line-height:33px;background:#ffffff;color:#000000"><span class="t">HR</span></div>
<div class="vl" style="left:599px;top:361px"></div>
<div class="c" style="left:600px;top:361px;width:149px;height:32px;line-height:33px;background:#ffffff;color:#000000"><span class="t">HSLA</span></div>
<div class="vl" style="left:749px;top:361px"></div>
<div class="c" style="left:750px;top:361px;width:82px;height:32px;line-height:33px;background:#ffffff;color:#000000"><span class="t">48.8000</span></div>
<div class="vl" style="left:832px;top:361px"></div>
<div class="c" style="left:833px;top:361px;width:77px;height:32px;line-height:33px;background:#ffffff;color:#000000"><span class="t">0.0000</span></div>
<div class="vl" style="left:910px;top:361px"></div>
<div class="c r" style="left:911px;top:361px;width:66px;height:32px;line-height:33px;background:#ffffff;color:#000000"><span class="t">20415</span></div>
<div class="vl" style="left:977px;top:361px"></div>
<div class="c r" style="left:978px;top:361px;width:74px;height:32px;line-height:33px;background:#ffffff;color:#000000"><span class="t">52.6300</span></div>
<div class="vl" style="left:1052px;top:361px"></div>
<div class="c" style="left:1053px;top:361px;width:44px;height:32px;line-height:33px;background:#ffffff;color:#000000"><span class="t">418</span></div>
<div class="vl" style="left:1097px;top:361px"></div>
<div class="c" style="left:1098px;top:361px;width:89px;height:32px;line-height:33px;background:#ffffff;color:#000000"></div>
<div class="vl" style="left:1187px;top:361px"></div>
<div class="c" style="left:1188px;top:361px;width:48px;height:32px;line-height:33px;background:#ffffff;color:#000000"></div>
<div class="vl" style="left:43px;top:361px"></div>
<div style="left:0;top:394px;width:43px;height:32px;background:#fff"></div>
<div class="hl" style="left:3px;top:426px;width:40px;background:#e6e6e6"></div>
<div class="c" style="left:44px;top:393px;width:119px;height:34px;line-height:35px;background:#ff00ff;color:#44005a"><span class="t">SS1404</span></div>
<div class="vl" style="left:163px;top:394px"></div>
<div class="c" style="left:164px;top:393px;width:74px;height:34px;line-height:35px;background:#ff00ff;color:#44005a"><span class="t">1 ABC ...</span></div>
<div class="vl" style="left:238px;top:394px"></div>
<div class="c" style="left:239px;top:393px;width:59px;height:34px;line-height:35px;background:#ff00ff;color:#44005a"><span class="t">AVA...</span></div>
<div class="vl" style="left:298px;top:394px"></div>
<div class="c r" style="left:299px;top:393px;width:62px;height:34px;line-height:35px;background:#ff00ff;color:#44005a"><span class="t">0.0750</span></div>
<div class="vl" style="left:361px;top:394px"></div>
<div class="c" style="left:362px;top:393px;width:44px;height:34px;line-height:35px;background:#ff00ff;color:#44005a"><span class="t">N...</span></div>
<div class="vl" style="left:406px;top:394px"></div>
<div class="c" style="left:407px;top:393px;width:62px;height:34px;line-height:35px;background:#ff00ff;color:#44005a"><span class="t">0.0000</span></div>
<div class="vl" style="left:469px;top:394px"></div>
<div class="c" style="left:470px;top:393px;width:62px;height:34px;line-height:35px;background:#ff00ff;color:#44005a"><span class="t">0.0000</span></div>
<div class="vl" style="left:532px;top:394px"></div>
<div class="c" style="left:533px;top:393px;width:66px;height:34px;line-height:35px;background:#ff00ff;color:#44005a"><span class="t">HR</span></div>
<div class="vl" style="left:599px;top:394px"></div>
<div class="c" style="left:600px;top:393px;width:149px;height:34px;line-height:35px;background:#ff00ff;color:#44005a"></div>
<div class="vl" style="left:749px;top:394px"></div>
<div class="c" style="left:750px;top:393px;width:82px;height:34px;line-height:35px;background:#ff00ff;color:#44005a"><span class="t">59.0000</span></div>
<div class="vl" style="left:832px;top:394px"></div>
<div class="c" style="left:833px;top:393px;width:77px;height:34px;line-height:35px;background:#ff00ff;color:#44005a"><span class="t">0.0000</span></div>
<div class="vl" style="left:910px;top:394px"></div>
<div class="c r" style="left:911px;top:393px;width:66px;height:34px;line-height:35px;background:#ff00ff;color:#44005a"><span class="t">46240</span></div>
<div class="vl" style="left:977px;top:394px"></div>
<div class="c r" style="left:978px;top:393px;width:74px;height:34px;line-height:35px;background:#ff00ff;color:#44005a"><span class="t">51.9500</span></div>
<div class="vl" style="left:1052px;top:394px"></div>
<div class="c" style="left:1053px;top:393px;width:44px;height:34px;line-height:35px;background:#ff00ff;color:#44005a"><span class="t">784</span></div>
<div class="vl" style="left:1097px;top:394px"></div>
<div class="c" style="left:1098px;top:393px;width:89px;height:34px;line-height:35px;background:#ff00ff;color:#44005a"></div>
<div class="vl" style="left:1187px;top:394px"></div>
<div class="c" style="left:1188px;top:393px;width:48px;height:34px;line-height:35px;background:#ff00ff;color:#44005a"></div>
<div class="vl" style="left:43px;top:394px"></div>
<div style="left:0;top:427px;width:43px;height:32px;background:#fff"></div>
<div class="hl" style="left:3px;top:459px;width:40px;background:#e6e6e6"></div>
<div class="c" style="left:44px;top:427px;width:119px;height:32px;line-height:33px;background:#ffffff;color:#000000"><span class="t">SS459</span></div>
<div class="vl" style="left:163px;top:427px"></div>
<div class="c" style="left:164px;top:427px;width:74px;height:32px;line-height:33px;background:#ffffff;color:#000000"><span class="t">12 AB...</span></div>
<div class="vl" style="left:238px;top:427px"></div>
<div class="c" style="left:239px;top:427px;width:59px;height:32px;line-height:33px;background:#ffffff;color:#000000"><span class="t">AVA...</span></div>
<div class="vl" style="left:298px;top:427px"></div>
<div class="c r" style="left:299px;top:427px;width:62px;height:32px;line-height:33px;background:#ffffff;color:#000000"><span class="t">0.0750</span></div>
<div class="vl" style="left:361px;top:427px"></div>
<div class="c" style="left:362px;top:427px;width:44px;height:32px;line-height:33px;background:#ffffff;color:#000000"><span class="t">N...</span></div>
<div class="vl" style="left:406px;top:427px"></div>
<div class="c" style="left:407px;top:427px;width:62px;height:32px;line-height:33px;background:#ffffff;color:#000000"><span class="t">0.0000</span></div>
<div class="vl" style="left:469px;top:427px"></div>
<div class="c" style="left:470px;top:427px;width:62px;height:32px;line-height:33px;background:#ffffff;color:#000000"><span class="t">0.0000</span></div>
<div class="vl" style="left:532px;top:427px"></div>
<div class="c" style="left:533px;top:427px;width:66px;height:32px;line-height:33px;background:#ffffff;color:#000000"><span class="t">HRPO</span></div>
<div class="vl" style="left:599px;top:427px"></div>
<div class="c" style="left:600px;top:427px;width:149px;height:32px;line-height:33px;background:#ffffff;color:#000000"><span class="t">CQ</span></div>
<div class="vl" style="left:749px;top:427px"></div>
<div class="c" style="left:750px;top:427px;width:82px;height:32px;line-height:33px;background:#ffffff;color:#000000"><span class="t">60.0000</span></div>
<div class="vl" style="left:832px;top:427px"></div>
<div class="c" style="left:833px;top:427px;width:77px;height:32px;line-height:33px;background:#ffffff;color:#000000"><span class="t">0.0000</span></div>
<div class="vl" style="left:910px;top:427px"></div>
<div class="c r" style="left:911px;top:427px;width:66px;height:32px;line-height:33px;background:#ffffff;color:#000000"><span class="t">22900</span></div>
<div class="vl" style="left:977px;top:427px"></div>
<div class="c r" style="left:978px;top:427px;width:74px;height:32px;line-height:33px;background:#ffffff;color:#000000"><span class="t">50.7500</span></div>
<div class="vl" style="left:1052px;top:427px"></div>
<div class="c" style="left:1053px;top:427px;width:44px;height:32px;line-height:33px;background:#ffffff;color:#000000"><span class="t">382</span></div>
<div class="vl" style="left:1097px;top:427px"></div>
<div class="c" style="left:1098px;top:427px;width:89px;height:32px;line-height:33px;background:#ffffff;color:#000000"></div>
<div class="vl" style="left:1187px;top:427px"></div>
<div class="c" style="left:1188px;top:427px;width:48px;height:32px;line-height:33px;background:#ffffff;color:#000000"></div>
<div class="vl" style="left:43px;top:427px"></div>
<div class="hl" style="left:44px;top:459px;width:1192px"></div>
<div style="left:0;top:460px;width:43px;height:32px;background:#fff"></div>
<div class="hl" style="left:3px;top:492px;width:40px;background:#e6e6e6"></div>
<div class="c" style="left:44px;top:460px;width:119px;height:32px;line-height:33px;background:#ffffff;color:#000000"><span class="t">SS305-03</span></div>
<div class="vl" style="left:163px;top:460px"></div>
<div class="c" style="left:164px;top:460px;width:74px;height:32px;line-height:33px;background:#ffffff;color:#000000"><span class="t">2 ABC ...</span></div>
<div class="vl" style="left:238px;top:460px"></div>
<div class="c" style="left:239px;top:460px;width:59px;height:32px;line-height:33px;background:#ffffff;color:#000000"><span class="t">AVA...</span></div>
<div class="vl" style="left:298px;top:460px"></div>
<div class="c r" style="left:299px;top:460px;width:62px;height:32px;line-height:33px;background:#ffffff;color:#000000"><span class="t">0.0760</span></div>
<div class="vl" style="left:361px;top:460px"></div>
<div class="c" style="left:362px;top:460px;width:44px;height:32px;line-height:33px;background:#ffffff;color:#000000"><span class="t">N...</span></div>
<div class="vl" style="left:406px;top:460px"></div>
<div class="c" style="left:407px;top:460px;width:62px;height:32px;line-height:33px;background:#ffffff;color:#000000"><span class="t">0.0000</span></div>
<div class="vl" style="left:469px;top:460px"></div>
<div class="c" style="left:470px;top:460px;width:62px;height:32px;line-height:33px;background:#ffffff;color:#000000"><span class="t">0.0000</span></div>
<div class="vl" style="left:532px;top:460px"></div>
<div class="c" style="left:533px;top:460px;width:66px;height:32px;line-height:33px;background:#ffffff;color:#000000"><span class="t">HR</span></div>
<div class="vl" style="left:599px;top:460px"></div>
<div class="c" style="left:600px;top:460px;width:149px;height:32px;line-height:33px;background:#ffffff;color:#000000"></div>
<div class="vl" style="left:749px;top:460px"></div>
<div class="c" style="left:750px;top:460px;width:82px;height:32px;line-height:33px;background:#ffffff;color:#000000"><span class="t">48.0000</span></div>
<div class="vl" style="left:832px;top:460px"></div>
<div class="c" style="left:833px;top:460px;width:77px;height:32px;line-height:33px;background:#ffffff;color:#000000"><span class="t">0.0000</span></div>
<div class="vl" style="left:910px;top:460px"></div>
<div class="c r" style="left:911px;top:460px;width:66px;height:32px;line-height:33px;background:#ffffff;color:#000000"><span class="t">4875</span></div>
<div class="vl" style="left:977px;top:460px"></div>
<div class="c r" style="left:978px;top:460px;width:74px;height:32px;line-height:33px;background:#ffffff;color:#000000"><span class="t">58.9500</span></div>
<div class="vl" style="left:1052px;top:460px"></div>
<div class="c" style="left:1053px;top:460px;width:44px;height:32px;line-height:33px;background:#ffffff;color:#000000"><span class="t">101</span></div>
<div class="vl" style="left:1097px;top:460px"></div>
<div class="c" style="left:1098px;top:460px;width:89px;height:32px;line-height:33px;background:#ffffff;color:#000000"></div>
<div class="vl" style="left:1187px;top:460px"></div>
<div class="c" style="left:1188px;top:460px;width:48px;height:32px;line-height:33px;background:#ffffff;color:#000000"></div>
<div class="vl" style="left:43px;top:460px"></div>
<div class="hl" style="left:44px;top:492px;width:1192px"></div>
<div style="left:0;top:493px;width:43px;height:32px;background:#fff"></div>
<div class="hl" style="left:3px;top:525px;width:40px;background:#e6e6e6"></div>
<div class="c" style="left:44px;top:493px;width:119px;height:32px;line-height:33px;background:#ffffff;color:#000000"><span class="t">SS410-01</span></div>
<div class="vl" style="left:163px;top:493px"></div>
<div class="c" style="left:164px;top:493px;width:74px;height:32px;line-height:33px;background:#ffffff;color:#000000"><span class="t">1 ABC ...</span></div>
<div class="vl" style="left:238px;top:493px"></div>
<div class="c" style="left:239px;top:493px;width:59px;height:32px;line-height:33px;background:#ffffff;color:#000000"><span class="t">AVA...</span></div>
<div class="vl" style="left:298px;top:493px"></div>
<div class="c r" style="left:299px;top:493px;width:62px;height:32px;line-height:33px;background:#ffffff;color:#000000"><span class="t">0.0760</span></div>
<div class="vl" style="left:361px;top:493px"></div>
<div class="c" style="left:362px;top:493px;width:44px;height:32px;line-height:33px;background:#ffffff;color:#000000"><span class="t">N...</span></div>
<div class="vl" style="left:406px;top:493px"></div>
<div class="c" style="left:407px;top:493px;width:62px;height:32px;line-height:33px;background:#ffffff;color:#000000"><span class="t">0.0000</span></div>
<div class="vl" style="left:469px;top:493px"></div>
<div class="c" style="left:470px;top:493px;width:62px;height:32px;line-height:33px;background:#ffffff;color:#000000"><span class="t">0.0000</span></div>
<div class="vl" style="left:532px;top:493px"></div>
<div class="c" style="left:533px;top:493px;width:66px;height:32px;line-height:33px;background:#ffffff;color:#000000"><span class="t">HR</span></div>
<div class="vl" style="left:599px;top:493px"></div>
<div class="c" style="left:600px;top:493px;width:149px;height:32px;line-height:33px;background:#ffffff;color:#000000"></div>
<div class="vl" style="left:749px;top:493px"></div>
<div class="c" style="left:750px;top:493px;width:82px;height:32px;line-height:33px;background:#ffffff;color:#000000"><span class="t">48.0000</span></div>
<div class="vl" style="left:832px;top:493px"></div>
<div class="c" style="left:833px;top:493px;width:77px;height:32px;line-height:33px;background:#ffffff;color:#000000"><span class="t">0.0000</span></div>
<div class="vl" style="left:910px;top:493px"></div>
<div class="c r" style="left:911px;top:493px;width:66px;height:32px;line-height:33px;background:#ffffff;color:#000000"><span class="t">21250</span></div>
<div class="vl" style="left:977px;top:493px"></div>
<div class="c r" style="left:978px;top:493px;width:74px;height:32px;line-height:33px;background:#ffffff;color:#000000"><span class="t">50.9500</span></div>
<div class="vl" style="left:1052px;top:493px"></div>
<div class="c" style="left:1053px;top:493px;width:44px;height:32px;line-height:33px;background:#ffffff;color:#000000"><span class="t">442</span></div>
<div class="vl" style="left:1097px;top:493px"></div>
<div class="c" style="left:1098px;top:493px;width:89px;height:32px;line-height:33px;background:#ffffff;color:#000000"></div>
<div class="vl" style="left:1187px;top:493px"></div>
<div class="c" style="left:1188px;top:493px;width:48px;height:32px;line-height:33px;background:#ffffff;color:#000000"><span class="t">PROC</span></div>
<div class="vl" style="left:43px;top:493px"></div>
<div class="hl" style="left:44px;top:525px;width:1192px"></div>
<div style="left:0;top:526px;width:43px;height:32px;background:#fff"></div>
<div class="hl" style="left:3px;top:558px;width:40px;background:#e6e6e6"></div>
<div class="c" style="left:44px;top:526px;width:119px;height:32px;line-height:33px;background:#ffffff;color:#000000"><span class="t">SS410-02</span></div>
<div class="vl" style="left:163px;top:526px"></div>
<div class="c" style="left:164px;top:526px;width:74px;height:32px;line-height:33px;background:#ffffff;color:#000000"><span class="t">1 ABC ...</span></div>
<div class="vl" style="left:238px;top:526px"></div>
<div class="c" style="left:239px;top:526px;width:59px;height:32px;line-height:33px;background:#ffffff;color:#000000"><span class="t">AVA...</span></div>
<div class="vl" style="left:298px;top:526px"></div>
<div class="c r" style="left:299px;top:526px;width:62px;height:32px;line-height:33px;background:#ffffff;color:#000000"><span class="t">0.0760</span></div>
<div class="vl" style="left:361px;top:526px"></div>
<div class="c" style="left:362px;top:526px;width:44px;height:32px;line-height:33px;background:#ffffff;color:#000000"><span class="t">N...</span></div>
<div class="vl" style="left:406px;top:526px"></div>
<div class="c" style="left:407px;top:526px;width:62px;height:32px;line-height:33px;background:#ffffff;color:#000000"><span class="t">0.0000</span></div>
<div class="vl" style="left:469px;top:526px"></div>
<div class="c" style="left:470px;top:526px;width:62px;height:32px;line-height:33px;background:#ffffff;color:#000000"><span class="t">0.0000</span></div>
<div class="vl" style="left:532px;top:526px"></div>
<div class="c" style="left:533px;top:526px;width:66px;height:32px;line-height:33px;background:#ffffff;color:#000000"><span class="t">HR</span></div>
<div class="vl" style="left:599px;top:526px"></div>
<div class="c" style="left:600px;top:526px;width:149px;height:32px;line-height:33px;background:#ffffff;color:#000000"></div>
<div class="vl" style="left:749px;top:526px"></div>
<div class="c" style="left:750px;top:526px;width:82px;height:32px;line-height:33px;background:#ffffff;color:#000000"><span class="t">48.0000</span></div>
<div class="vl" style="left:832px;top:526px"></div>
<div class="c" style="left:833px;top:526px;width:77px;height:32px;line-height:33px;background:#ffffff;color:#000000"><span class="t">0.0000</span></div>
<div class="vl" style="left:910px;top:526px"></div>
<div class="c r" style="left:911px;top:526px;width:66px;height:32px;line-height:33px;background:#ffffff;color:#000000"><span class="t">5000</span></div>
<div class="vl" style="left:977px;top:526px"></div>
<div class="c r" style="left:978px;top:526px;width:74px;height:32px;line-height:33px;background:#ffffff;color:#000000"><span class="t">50.9500</span></div>
<div class="vl" style="left:1052px;top:526px"></div>
<div class="c" style="left:1053px;top:526px;width:44px;height:32px;line-height:33px;background:#ffffff;color:#000000"><span class="t">104</span></div>
<div class="vl" style="left:1097px;top:526px"></div>
<div class="c" style="left:1098px;top:526px;width:89px;height:32px;line-height:33px;background:#ffffff;color:#000000"></div>
<div class="vl" style="left:1187px;top:526px"></div>
<div class="c" style="left:1188px;top:526px;width:48px;height:32px;line-height:33px;background:#ffffff;color:#000000"><span class="t">PROC</span></div>
<div class="vl" style="left:43px;top:526px"></div>
<div class="hl" style="left:44px;top:558px;width:1192px"></div>
</div>
<svg style="position:absolute;left:9px;top:42px" width="9" height="14" viewBox="0 0 9 14"><path d="M1 0.5 L8 7 L1 13.5 Z" fill="#3a3a3a"/></svg>
<div style="left:1249px;top:26px;width:2.5px;height:37px;background:#747474"></div>
<div style="left:24px;top:568px;width:836px;height:3px;background:#6e6e6e"></div>
</div>
</body></html>
